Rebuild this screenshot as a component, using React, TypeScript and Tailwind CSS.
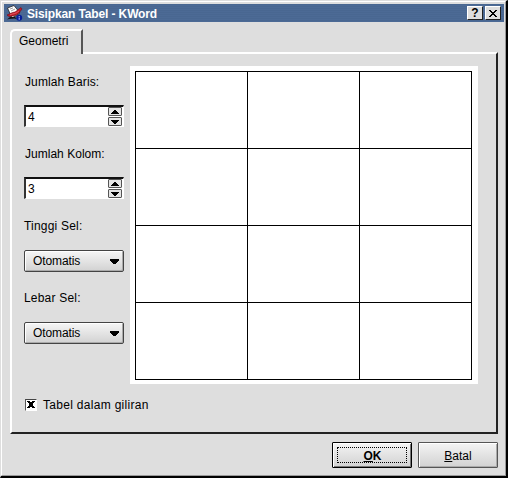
import React from 'react';

function AppIcon() {
  return (
    <svg width="18" height="18" viewBox="0 0 18 18">
      <path d="M1.5 4L8 1.5L14 9L6 14Z" fill="#fff" stroke="#222" strokeWidth="0.8" />
      <path d="M4 5l3-1M5 7l4-2" stroke="#888" strokeWidth="0.8" />
      <path d="M1 11C4 10 5 8.5 9 8L15 3.5L16 5L13 9C10 12 6 12 3 12.5Z" fill="#c41a28" stroke="#6a0c14" strokeWidth="0.6" />
      <path d="M4 10.8C7 9.5 10 10 13 7" stroke="#ea6a70" strokeWidth="0.8" fill="none" />
      <path d="M1 15.5L4 13H9L11 15L8 14.5L3 15Z" fill="#151515" />
      <circle cx="13.2" cy="13.8" r="3" fill="#071f9a" />
      <path d="M12.7 12h1v1h-1zM12.7 13.6h1v2.2h-1z" fill="#a8b8ff" />
    </svg>
  );
}

function TitleButton({ children }: { children: React.ReactNode }) {
  return (
    <div className="flex h-[14px] w-[16px] items-center justify-center border border-t-white border-l-white border-r-[#222] border-b-[#222] bg-[#dedede]">
      {children}
    </div>
  );
}

function Arrow({ up }: { up?: boolean }) {
  return (
    <div className="flex h-[9px] w-[14px] items-center justify-center rounded-[1px] border border-[#555] bg-[#e4e4e4]">
      <svg width="8" height="4" viewBox="0 0 8 4" shapeRendering="crispEdges">
        <path d={up ? 'M3 0h2v1h1v1h1v1h1v1H0V3h1V2h1V1h1z' : 'M0 0h8v1H7v1H6v1H5v1H3V3H2V2H1V1H0z'} />
      </svg>
    </div>
  );
}

function Spin({ label, tracking, value }: { label: string; tracking: string; value: string }) {
  return (
    <div className="h-[72px]">
      <div className={`h-[30px] pl-px leading-[14px] ${tracking}`}>{label}</div>
      <div className="flex h-[22px] w-[100px] border-t-2 border-l-2 border-r border-b border-t-[#111] border-l-[#333] border-r-white border-b-white bg-white">
        <div className="flex-1 pl-[2px] leading-[20px]">{value}</div>
        <div className="mr-px flex flex-col gap-px">
          <Arrow up />
          <Arrow />
        </div>
      </div>
    </div>
  );
}

function Combo({ label, tracking }: { label: string; tracking: string }) {
  return (
    <div className="h-[72px]">
      <div className={`h-[31px] leading-[14px] ${tracking}`}>{label}</div>
      <div className="flex h-[22px] w-[100px] items-center justify-between rounded-[2px] border border-[#444] bg-linear-to-b from-[#f6f6f6] to-[#d2d2d2] pr-[4px] pl-[8px] shadow-[inset_1px_1px_0_#fff,inset_-1px_-1px_0_#aaa]">
        <span className="tracking-[-0.1px]">Otomatis</span>
        <svg width="9" height="5" viewBox="0 0 9 5" shapeRendering="crispEdges">
          <path d="M0 0h9v2H8v1H7v1H6v1H3V4H2V3H1V2H0z" />
        </svg>
      </div>
    </div>
  );
}

const cells = Array.from({ length: 12 }, (_, i) => i);

export default function App() {
  return (
    <div className="flex h-[478px] w-[508px] flex-col border-t border-l border-r-2 border-b-2 border-t-[#dedede] border-l-[#dedede] border-r-black border-b-black bg-[#dedede] font-['Liberation_Sans',Arial,sans-serif] text-[12px] text-black">
      <div className="flex h-[475px] flex-col border-t border-l border-r border-b border-t-white border-l-white border-r-[#999] border-b-[#999] pt-[2px] pr-px pl-[2px]">
        <div className="flex h-[18px] shrink-0 items-center bg-[#4b6993] bg-[repeating-linear-gradient(0deg,#4c6a95_0_1px,#496791_1px_2px)] pr-[3px] pl-[2px]">
          <AppIcon />
          <span className="ml-[3px] flex-1 pt-px font-bold tracking-[-0.13px] whitespace-nowrap text-white">Sisipkan Tabel - KWord</span>
          <div className="flex gap-[2px]">
            <TitleButton>
              <span className="text-[12px] leading-[12px] font-bold">?</span>
            </TitleButton>
            <TitleButton>
              <svg width="8" height="7" viewBox="0 0 8 7" shapeRendering="crispEdges">
                <path d="M0 0h2v1h1v1h2V1h1V0h2v1H7v1H6v1H5v1h1v1h1v1h1v1H6V6H5V5H3v1H2v1H0V6h1V5h1V4h1V3H2V2H1V1H0z" />
              </svg>
            </TitleButton>
          </div>
        </div>

        <div className="flex flex-1 flex-col pt-[7px] pr-[5px] pl-[6px]">
          <div className="z-10 flex h-[25px] w-[73px] rounded-tl-[5px] border-t-2 border-r-2 border-l-2 border-t-white border-r-[#555] border-l-white bg-[#dedede] pt-[3px] pl-[7px]">
            <span className="leading-[14px]">Geometri</span>
          </div>
          <div className="-mt-[2px] flex h-[382px] w-[488px] border-2 border-t-white border-r-[#222] border-b-[#222] border-l-white pl-[12px]">
            <div className="flex w-[106px] flex-col pt-[21px]">
              <Spin label="Jumlah Baris:" tracking="tracking-[0.12px]" value="4" />
              <Spin label="Jumlah Kolom:" tracking="tracking-[0.02px]" value="3" />
              <Combo label="Tinggi Sel:" tracking="tracking-[0.2px]" />
              <Combo label="Lebar Sel:" tracking="tracking-[0.2px]" />
              <div className="mt-[35px] flex h-[13px] items-center whitespace-nowrap">
                <div className="ml-px flex h-[12px] w-[12px] shrink-0 items-center justify-center border-t border-l border-r border-b border-t-[#444] border-l-[#555] border-r-white border-b-white bg-white">
                  <svg width="8" height="7" viewBox="0 0 8 7" shapeRendering="crispEdges">
                    <path d="M0 0h3v1h2V0h3v1H7v1H6v3h1v1h1v1H5V6H3v1H0V6h1V5h1V2H1V1H0z" />
                  </svg>
                </div>
                <span className="ml-[6px] tracking-[0.3px]">Tabel dalam giliran</span>
              </div>
            </div>
            <div className="mt-[12px] h-[318px] w-[348px] shrink-0 bg-white p-[5px]">
              <div className="grid h-[309px] w-[337px] grid-cols-[repeat(3,112px)] grid-rows-[repeat(4,77px)] border-t border-l border-black">
                {cells.map((i) => (
                  <div key={i} className="border-r border-b border-black" />
                ))}
              </div>
            </div>
          </div>
          <div className="mt-[8px] flex justify-end gap-[6px] pr-px">
            <button className="h-[26px] w-[80px] rounded-[1px] border border-black bg-linear-to-b from-[#f4f4f4] to-[#d2d2d2] p-[4px] shadow-[inset_1px_1px_0_#fff,inset_-1px_-1px_0_#777]">
              <span className="flex h-full items-center justify-center border border-dotted border-black pl-px pt-px font-bold">
                <span className="underline">O</span>K
              </span>
            </button>
            <button className="h-[26px] w-[80px] rounded-[1px] border border-[#555] bg-linear-to-b from-[#f4f4f4] to-[#d2d2d2] pt-px shadow-[inset_1px_1px_0_#fff,inset_-1px_-1px_0_#aaa]">
              <span className="underline">B</span>atal
            </button>
          </div>
        </div>
      </div>
    </div>
  );
}
